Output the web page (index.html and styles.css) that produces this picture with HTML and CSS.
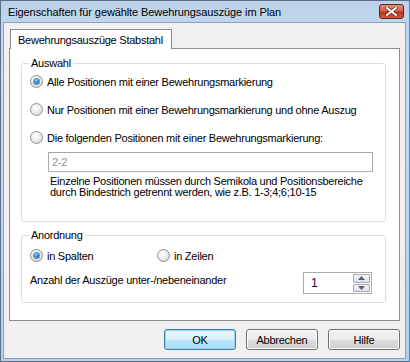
FILE: index.html
```html
<!DOCTYPE html>
<html>
<head>
<title>Eigenschaften</title>
<link rel="stylesheet" href="styles.css">
</head>
<body>

  <div class="window">
    <div class="titlebar">
      <span class="title">Eigenschaften für gewählte Bewehrungsauszüge im Plan</span>
      <span class="close-btn">
        <svg width="13" height="9" viewBox="0 0 13 9">
          <path d="M2 1 L11 8 M11 1 L2 8" stroke="#5a1f1f" stroke-width="3.4" stroke-linecap="square"/>
          <path d="M2 1 L11 8 M11 1 L2 8" stroke="#fff" stroke-width="2" stroke-linecap="square"/>
        </svg>
      </span>
    </div>

    <div class="client">
      <div class="tabs">
        <div class="tab active">Bewehrungsauszüge Stabstahl</div>
      </div>

      <div class="tab-panel">
        <fieldset class="group group-auswahl">
          <legend>Auswahl</legend>
          <label class="option">
            <span class="radio checked"></span>
            Alle Positionen mit einer Bewehrungsmarkierung
          </label>
          <label class="option">
            <span class="radio"></span>
            Nur Positionen mit einer Bewehrungsmarkierung und ohne Auszug
          </label>
          <label class="option">
            <span class="radio"></span>
            Die folgenden Positionen mit einer Bewehrungsmarkierung:
          </label>
          <div class="text-field">2-2</div>
          <p class="hint">
            Einzelne Positionen müssen durch Semikola und Positionsbereiche<br>
            durch Bindestrich getrennt werden, wie z.B. 1-3;4;6;10-15
          </p>
        </fieldset>

        <fieldset class="group group-anordnung">
          <legend>Anordnung</legend>
          <div class="radio-row">
            <label class="option col-1">
              <span class="radio checked"></span>
              in Spalten
            </label>
            <label class="option">
              <span class="radio"></span>
              in Zeilen
            </label>
          </div>
          <div class="count-row">
            <span class="count-label">Anzahl der Auszüge unter-/nebeneinander</span>
            <div class="spinner">
              <span class="spinner-value">1</span>
              <div class="spinner-buttons">
                <span class="spin-btn">
                  <svg width="7" height="4" viewBox="0 0 7 4"><path d="M0 4 L3.5 0 L7 4 Z" fill="#4d6185"/></svg>
                </span>
                <span class="spin-btn">
                  <svg width="7" height="4" viewBox="0 0 7 4"><path d="M0 0 L3.5 4 L7 0 Z" fill="#4d6185"/></svg>
                </span>
              </div>
            </div>
          </div>
        </fieldset>
      </div>

      <div class="button-row">
        <button class="dlg-button default">OK</button>
        <button class="dlg-button">Abbrechen</button>
        <button class="dlg-button">Hilfe</button>
      </div>
    </div>
  </div>

</body>
</html>
```

FILE: styles.css
```css
:root {
  --frame-dark: #5b6f86;
  --dialog-bg: #f0f0f0;
  --panel-border: #898c95;
  --group-border: #d5dfe5;
  --text-color: #000;
  --gray-text: #8d8d8d;
}

body {
  margin: 0;
  font-family: 'Liberation Sans', Arial, sans-serif;
  font-size: 11px;
  letter-spacing: -0.25px;
  color: var(--text-color);
  background: #fff;
}

.window {
  width: 410px;
  height: 362px;
  box-sizing: border-box;
  background: linear-gradient(to bottom, #bcd2ea 0%, #c9dcf0 20%, #b7cfe8 100%);
  border: 1px solid var(--frame-dark);
  border-right-color: #3b8fd6;
  display: flex;
  flex-direction: column;
  padding: 0 3px 2px 2px;
}

.titlebar {
  height: 21px;
  display: flex;
  align-items: center;
  padding-left: 5px;
  padding-right: 2px;
}

.title {
  font-size: 11px;
  letter-spacing: -0.1px;
  color: #000;
}

.close-btn {
  margin-left: auto;
  width: 23px;
  height: 13px;
  border: 1px solid #5e2020;
  border-radius: 3px;
  background: linear-gradient(to bottom, #e58f7c 0%, #d0604a 45%, #bb3318 55%, #cc5b42 100%);
  display: flex;
  align-items: center;
  justify-content: center;
  margin-top: -1px;
}

.client {
  flex: 1;
  background: var(--dialog-bg);
  border: 1px solid #8aa3bd;
  display: flex;
  flex-direction: column;
  padding: 6px 5px 0 5px;
}

/* tab header */
.tabs {
  display: flex;
  padding-left: 1px;
}

.tab {
  height: 19px;
  padding: 0 8px 0 7px;
  display: flex;
  align-items: center;
  border: 1px solid var(--panel-border);
  border-bottom: none;
  background: #fff;
  position: relative;
  margin-bottom: -1px;
  z-index: 1;
}

.tab-panel {
  height: 273px;
  box-sizing: border-box;
  background: #fff;
  border: 1px solid var(--panel-border);
  padding: 8px 13px 0 11px;
  display: flex;
  flex-direction: column;
}

/* group boxes */
.group {
  margin: 0;
  border: 1px solid var(--group-border);
  border-radius: 3px;
  padding: 0 0 0 8px;
  box-sizing: border-box;
}

.group legend {
  padding: 0 2px;
  margin-left: -1px;
  line-height: 13px;
}

.group-auswahl {
  height: 165px;
}

.group-anordnung {
  margin-top: 7px;
  height: 74px;
}

.option {
  display: flex;
  align-items: center;
  height: 13px;
  gap: 4px;
  white-space: nowrap;
}

.group-auswahl .option {
  margin-top: 15px;
}

.group-auswahl .option:first-of-type {
  margin-top: 5px;
}

.radio {
  width: 11px;
  height: 11px;
  border: 1px solid #8e8f8f;
  border-radius: 50%;
  background: radial-gradient(circle at 40% 35%, #fff 0%, #f0f0f0 40%, #cfcfcf 100%);
  display: inline-flex;
  align-items: center;
  justify-content: center;
  flex: none;
}

.radio.checked::after {
  content: '';
  width: 5px;
  height: 5px;
  border-radius: 50%;
  background: radial-gradient(circle at 40% 35%, #8fd3ff 0%, #2a7fd0 55%, #0f4c92 100%);
  box-shadow: 0 0 0 1px #5e8fc1;
}

.text-field {
  margin: 8px 0 0 18px;
  width: 325px;
  height: 20px;
  box-sizing: border-box;
  border: 1px solid #abadb3;
  border-top-color: #a6a6a6;
  color: var(--gray-text);
  padding-left: 3px;
  display: flex;
  align-items: center;
}

.hint {
  margin: 4px 0 0 20px;
  line-height: 11px;
  white-space: nowrap;
}

.radio-row {
  display: flex;
  margin-top: 7px;
}

.col-1 {
  width: 127px;
}

.count-row {
  display: flex;
  align-items: flex-start;
  margin-top: 10px;
}

.count-label {
  margin-top: 2px;
  line-height: 13px;
}

.spinner {
  margin-left: auto;
  margin-right: 13px;
  width: 69px;
  height: 22px;
  box-sizing: border-box;
  border: 1px solid #abadb3;
  display: flex;
  align-items: center;
}

.spinner-value {
  flex: 1;
  padding-left: 7px;
  font-size: 12px;
  color: #1a0033;
}

.spinner-buttons {
  display: flex;
  flex-direction: column;
  align-self: stretch;
  padding: 1px;
  gap: 1px;
}

.spin-btn {
  flex: 1;
  width: 15px;
  border: 1px solid #a8acb4;
  border-radius: 1px;
  background: linear-gradient(to bottom, #f6f6f6, #dcdfe4);
  display: flex;
  align-items: center;
  justify-content: center;
}

/* dialog buttons */
.button-row {
  display: flex;
  justify-content: flex-end;
  gap: 10px;
  margin-top: 8px;
}

.dlg-button {
  width: 72px;
  height: 21px;
  font-family: 'Liberation Sans', Arial, sans-serif;
  font-size: 11px;
  letter-spacing: -0.25px;
  color: #000;
  border: 1px solid #707070;
  border-radius: 3px;
  background: linear-gradient(to bottom, #f2f2f2 0%, #ebebeb 50%, #dddddd 51%, #cfcfcf 100%);
  box-shadow: inset 0 0 0 1px #fcfcfc;
  padding: 0;
}

.dlg-button.default {
  border-color: #3c7fb1;
  background: linear-gradient(to bottom, #eaf6fd 0%, #d9f0fc 50%, #bee6fd 51%, #a7d9f5 100%);
  box-shadow: inset 0 0 0 1px #98d1ef;
}
```
